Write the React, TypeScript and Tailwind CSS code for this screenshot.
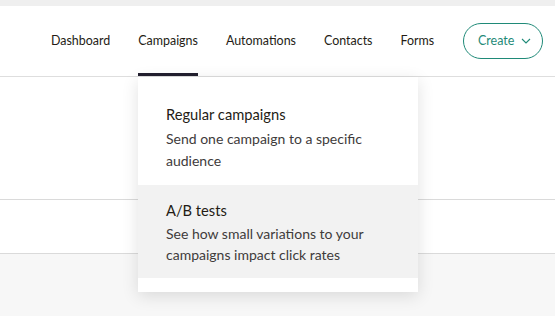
import React from "react";

const navFont = { fontFamily: 'Lato, "Open Sans", sans-serif' };

export default function App() {
  const items = ["Dashboard", "Campaigns", "Automations", "Contacts", "Forms"];
  return (
    <div className="relative w-[555px] h-[316px] overflow-hidden bg-[#f7f7f7]">
      <div className="h-[6px] bg-[#efefef]" />
      <div className="h-[71px] bg-white border-b border-[#dedede] flex items-stretch pl-[51px]" style={navFont}>
        <nav className="flex items-stretch gap-[28px]">
          {items.map((it) => (
            <div key={it} className="relative flex items-center text-[12.45px] text-[#241c15]">
              {it}
              {it === "Campaigns" && (
                <div className="absolute left-0 right-0 bottom-0 h-[3px] bg-[#221f2f]" />
              )}
            </div>
          ))}
        </nav>
        <div className="flex items-center ml-[29px]">
          <button className="h-[36px] w-[80px] rounded-full border border-[#1f8a78] text-[#1f8a78] text-[12.5px] flex items-center justify-center gap-[7px] pl-[3px]">
            <span>Create</span>
            <svg width="10" height="6" viewBox="0 0 10 6" fill="none">
              <path d="M1 1l4 4 4-4" stroke="#1f8a78" strokeWidth="1.1" />
            </svg>
          </button>
        </div>
      </div>
      <div className="h-[123px] bg-white border-b border-[#dadada]" />
      <div className="h-[54px] bg-white border-b border-[#dadada]" />

      <div
        className="absolute left-[138px] top-[77px] w-[280px] bg-white pt-[12px] pb-[14px] shadow-[0_4px_16px_rgba(0,0,0,0.12)]"
        style={{ fontFamily: 'Lato, "Open Sans", sans-serif' }}
      >
        <div className="pl-[28px] pr-[20px] pt-[14px] pb-[13px]">
          <div className="text-[14.7px] leading-[22px] text-[#241c15]">
            Regular campaigns
          </div>
          <div className="mt-[3px] text-[14px] leading-[22px] text-[#403b3b]">
            Send one campaign to a specific audience
          </div>
        </div>
        <div className="pl-[28px] pr-[20px] pt-[14px] pb-[13px] bg-[#f2f2f2]">
          <div className="text-[14.7px] leading-[22px] text-[#241c15]">
            A/B tests
          </div>
          <div className="mt-[2px] text-[14px] leading-[21px] text-[#403b3b]">
            See how small variations to your campaigns impact click rates
          </div>
        </div>
      </div>
    </div>
  );
}
